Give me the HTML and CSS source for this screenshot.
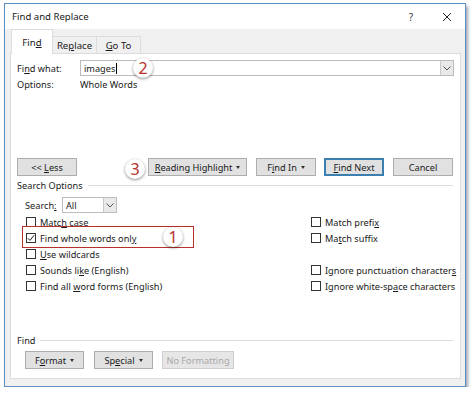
FILE: index.html
```html
<!DOCTYPE html>
<html lang="en">
<head>
    <meta charset="UTF-8">
    <title>Find and Replace</title>
    <link rel="stylesheet" href="styles.css">
</head>
<body>
    <div class="dialog">
        <div class="titlebar">
            <span class="title">Find and Replace</span>
            <span class="help">?</span>
            <svg class="close" width="10" height="10" viewBox="0 0 10 10"><path d="M1 1L9 9M9 1L1 9" stroke="#222" stroke-width="1"/></svg>
        </div>

        <div class="frame">
            <div class="tabs">
                <div class="tab active"><span>Fin<u>d</u></span></div>
                <div class="tab"><span>Re<u>p</u>lace</span></div>
                <div class="tab"><span><u>G</u>o To</span></div>
            </div>

            <div class="panel">
                <div class="find-row">
                    <label class="field-label">Fi<u>n</u>d what:</label>
                    <div class="combo wide">
                        <span class="combo-text">images<span class="caret"></span></span>
                        <span class="combo-btn"><svg width="8" height="5" viewBox="0 0 8 5"><path d="M0.5 0.5L4 4L7.5 0.5" fill="none" stroke="#555"/></svg></span>
                    </div>
                </div>
                <div class="options-row">
                    <span class="field-label">Options:</span>
                    <span>Whole Words</span>
                </div>

                <div class="button-row">
                    <button class="btn w60"><span>&lt;&lt; <u>L</u>ess</span></button>
                    <button class="btn highlight"><span><u>R</u>eading Highlight</span><span class="arrow"></span></button>
                    <button class="btn w60 find-in"><span>F<u>i</u>nd In</span><span class="arrow"></span></button>
                    <button class="btn w60 default"><span><u>F</u>ind Next</span></button>
                    <button class="btn w60"><span>Cancel</span></button>
                </div>

                <div class="group-title"><span>Search Options</span></div>

                <div class="search-row">
                    <span class="search-label">Search<u>:</u></span>
                    <div class="combo small">
                        <span class="combo-text">All</span>
                        <span class="combo-btn"><svg width="8" height="5" viewBox="0 0 8 5"><path d="M0.5 0.5L4 4L7.5 0.5" fill="none" stroke="#555"/></svg></span>
                    </div>
                </div>

                <div class="checks">
                    <div class="check"><span class="box"></span><span>Matc<u>h</u> case</span></div>
                    <div class="check"><span class="box"></span><span>Match prefi<u>x</u></span></div>
                    <div class="check"><span class="box checked"><svg width="8" height="8" viewBox="0 0 8 8"><path d="M0.8 4.2L3 6.4L7.2 1.2" fill="none" stroke="#222" stroke-width="1"/></svg></span><span>Find whole words onl<u>y</u></span></div>
                    <div class="check"><span class="box"></span><span>Ma<u>t</u>ch suffix</span></div>
                    <div class="check"><span class="box"></span><span><u>U</u>se wildcards</span></div>
                    <div class="check empty"></div>
                    <div class="check"><span class="box"></span><span>Sounds li<u>k</u>e (English)</span></div>
                    <div class="check"><span class="box"></span><span>Ignore punctuation character<u>s</u></span></div>
                    <div class="check"><span class="box"></span><span>Find all <u>w</u>ord forms (English)</span></div>
                    <div class="check"><span class="box"></span><span>Ignore white-sp<u>a</u>ce characters</span></div>
                </div>

                <div class="group-title find-group"><span>Find</span></div>

                <div class="bottom-row">
                    <button class="btn w59"><span>F<u>o</u>rmat</span><span class="arrow"></span></button>
                    <button class="btn w59"><span>Sp<u>e</u>cial</span><span class="arrow"></span></button>
                    <button class="btn disabled"><span>No Formatting</span></button>
                </div>

                <div class="mark-box"></div>
                <div class="badge b1">1</div>
                <div class="badge b2">2</div>
                <div class="badge b3">3</div>
            </div>
        </div>
    </div>
</body>
</html>
```

FILE: styles.css
```css
:root {
    --text: #1a1a1a;
    --face: #f0f0f0;
    --btn: #e1e1e1;
    --btn-border: #adadad;
    --line: #dcdcdc;
    --accent: #3c7fb1;
    --mark: #b8302a;
}

* {
    margin: 0;
    padding: 0;
    box-sizing: border-box;
}

body {
    background: #fff;
    font-family: "Noto Sans", "Open Sans", sans-serif;
    font-size: 9.2px;
    color: var(--text);
    padding: 3px 0 0 4px;
}

u {
    text-decoration: underline;
    text-underline-offset: 1px;
}

.dialog {
    width: 462px;
    height: 384px;
    border: 1px solid #5d8fc2;
    background: var(--face);
    box-shadow: 2px 3px 3px rgba(40, 60, 90, 0.45);
    display: flex;
    flex-direction: column;
}

/* title bar */
.titlebar {
    height: 25px;
    background: #fff;
    display: flex;
    align-items: center;
    padding: 0 0 0 7px;
    font-size: 9.6px;
}

.title {
    flex: 1;
}

.help {
    margin-right: 29px;
    font-size: 10px;
    color: #333;
}

.close {
    margin-right: 13px;
}

/* tabs + panel */
.frame {
    padding: 0 4px 0 5px;
    flex: 1;
    display: flex;
    flex-direction: column;
}

.tabs {
    display: flex;
    align-items: flex-end;
    height: 24px;
    padding-left: 1px;
    position: relative;
    z-index: 1;
}

.tab {
    height: 17px;
    width: 45px;
    border: 1px solid var(--line);
    border-bottom: none;
    margin-left: -1px;
    display: flex;
    align-items: center;
    justify-content: center;
    background: var(--face);
    font-size: 9.6px;
}

.tab.active {
    width: 42px;
    height: 25px;
    margin-bottom: -1px;
    background: #fff;
    margin-left: 0;
}

.tab.active + .tab {
    margin-left: 0;
    border-left: none;
    width: 44px;
}

.panel {
    position: relative;
    height: 326px;
    background: #fff;
    border: 1px solid var(--line);
    padding: 6px 6px 0 6px;
}

.find-row {
    display: flex;
    height: 16px;
    align-items: center;
}

.field-label {
    width: 63px;
    flex: none;
}

.combo {
    height: 16px;
    border: 1px solid #bcbcbc;
    display: flex;
    align-items: center;
    background: #fff;
}

.combo.wide {
    width: 375px;
}

.combo-text {
    flex: 1;
    padding-left: 3px;
    display: flex;
    align-items: center;
}

.caret {
    width: 1px;
    height: 11px;
    background: #000;
    margin-left: 1px;
}

.combo-btn {
    width: 13px;
    height: 14px;
    border-left: 1px solid #c8c8c8;
    background: #e9e9e9;
    display: flex;
    align-items: center;
    justify-content: center;
}

.options-row {
    display: flex;
    height: 14px;
    margin-top: 1px;
    align-items: center;
}

.button-row {
    display: flex;
    margin-top: 67px;
    height: 18px;
}

.btn {
    font: inherit;
    color: var(--text);
    height: 18px;
    background: var(--btn);
    border: 1px solid var(--btn-border);
    display: flex;
    align-items: center;
    justify-content: center;
    gap: 4px;
    white-space: nowrap;
}

.w60 {
    width: 60px;
}

.w59 {
    width: 59px;
}

.btn.highlight {
    width: 99px;
    margin-left: 71px;
}

.find-in {
    margin-left: 9px;
}

.btn.default {
    margin-left: 8px;
    border: 2px solid var(--accent);
}

.btn.default + .btn {
    margin-left: 9px;
}

.arrow {
    width: 0;
    height: 0;
    border-left: 2.5px solid transparent;
    border-right: 2.5px solid transparent;
    border-top: 3px solid #333;
}

.group-title {
    display: flex;
    align-items: center;
    height: 14px;
    margin-top: 2px;
    gap: 5px;
    padding-right: 1px;
}

.group-title::after {
    content: "";
    flex: 1;
    height: 1px;
    background: var(--line);
}

.search-row {
    display: flex;
    align-items: center;
    height: 16px;
    margin-top: 5px;
    padding-left: 8px;
}

.search-label {
    width: 37px;
}

.combo.small {
    width: 55px;
}

.checks {
    display: grid;
    grid-template-columns: 285px 1fr;
    grid-auto-rows: 16px;
    padding-left: 9px;
    margin-top: 1px;
}

.check {
    display: flex;
    align-items: center;
    gap: 4px;
    white-space: nowrap;
}

.box {
    width: 10px;
    height: 10px;
    border: 1px solid #333;
    background: #fff;
    display: flex;
    align-items: center;
    justify-content: center;
    flex: none;
}

.find-group {
    margin-top: 39px;
}

.bottom-row {
    display: flex;
    gap: 10px;
    margin-top: 4px;
    padding-left: 8px;
}

.btn.disabled {
    width: 72px;
    color: #a8a8a8;
    border-color: #cfcfcf;
    background: #e6e6e6;
    margin-left: -1px;
}

/* annotations */
.mark-box {
    position: absolute;
    left: 11px;
    top: 172px;
    width: 172px;
    height: 22px;
    border: 1.5px solid var(--mark);
}

.badge {
    position: absolute;
    width: 20px;
    height: 20px;
    border-radius: 50%;
    background: #fff;
    box-shadow: 0 1px 3px rgba(0, 0, 0, 0.45);
    color: var(--mark);
    font-size: 16px;
    line-height: 20px;
    text-align: center;
}

.b1 { left: 152px; top: 173px; }
.b2 { left: 122px; top: 4px; }
.b3 { left: 114px; top: 105px; }
```
